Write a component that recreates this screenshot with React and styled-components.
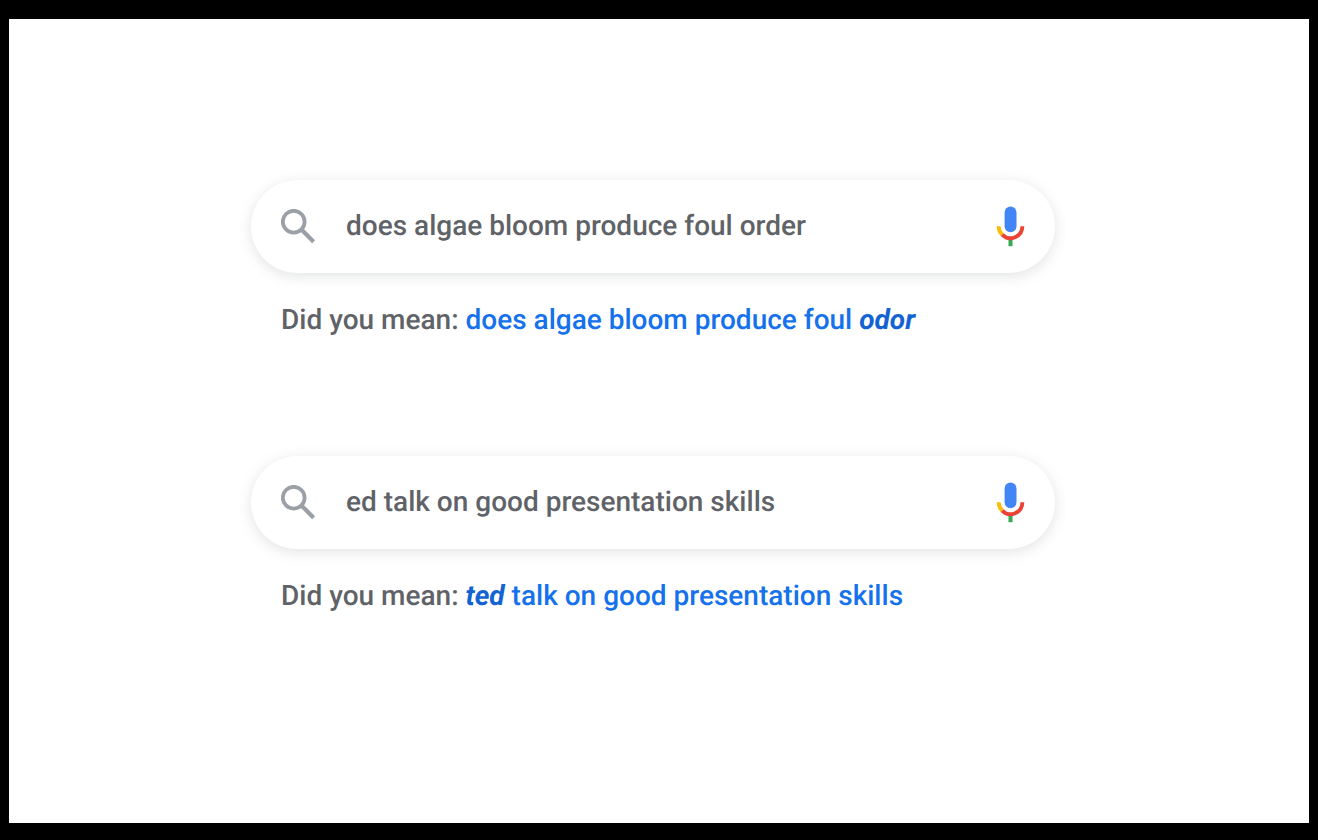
import React from 'react'
import styled, { createGlobalStyle } from 'styled-components'

const GlobalStyle = createGlobalStyle`
    * {
        box-sizing: border-box;
    }

    body {
        margin: 0;
        font-family: Roboto, sans-serif;
        color: #5f6368;
        background: #000000;
        text-rendering: geometricPrecision;
    }
`

const Frame = styled.div`
    display: flex;
    min-height: 100vh;
    padding: 19px 9px 17px;
`

const Main = styled.main`
    flex: 1;
    display: flex;
    flex-direction: column;
    align-items: center;
    gap: 117px;
    padding: 161px 12px 48px 0;
    background: #ffffff;
`

const Search = styled.form`
    width: 100%;
    max-width: 804px;
`

const Bar = styled.div`
    display: flex;
    align-items: center;
    height: 93px;
    padding: 0 29px 0 30px;
    border-radius: 48px;
    background: #ffffff;
    box-shadow: 0 3px 14px rgba(60, 64, 67, 0.15);
`

const Label = styled.label`
    display: flex;
`

const Field = styled.input`
    flex: 1;
    min-width: 0;
    margin: 0 30px;
    padding: 0 0 2px;
    border: none;
    outline: none;
    font: 500 28px Roboto, sans-serif;
    color: #5f6368;
    background: transparent;
    text-rendering: inherit;
`

const MicButton = styled.button`
    display: flex;
    padding: 0;
    border: none;
    background: none;
    cursor: pointer;
`

const Suggestion = styled.p`
    margin: 27px 0 0 30px;
    font-size: 28px;
    font-weight: 500;
    line-height: 39px;
`

const SuggestionLink = styled.a`
    color: #1571ec;
    text-decoration: none;
`

const Fix = styled.em`
    font-weight: 700;
    color: #1463d3;
`

const SearchIcon = () => (
    <svg width="35" height="35" viewBox="0 0 35 35" fill="none" stroke="#9aa0a6" aria-hidden="true">
        <circle cx="12.7" cy="12.7" r="10.9" strokeWidth="3.8" />
        <path d="M20.4 20.4 L32.6 32.7" strokeWidth="4.2" />
    </svg>
)

const MicIcon = () => (
    <svg width="30" height="41" viewBox="0 0 30 41" fill="none" aria-hidden="true">
        <rect x="8.6" y="0.5" width="11.9" height="25.7" rx="5.95" fill="#4285f4" />
        <path d="M14.5 32.5 V40.2" stroke="#34a853" strokeWidth="4" />
        <path d="M2.65 20.3 A11.85 11.85 0 0 0 6.12 28.68" stroke="#fbbc04" strokeWidth="3.9" />
        <path d="M6.12 28.68 A11.85 11.85 0 0 0 26.35 20.3" stroke="#ea4335" strokeWidth="3.9" />
    </svg>
)

const SearchBox = ({ id, query, children }) => (
    <Search role="search" onSubmit={e => e.preventDefault()}>
        <Bar>
            <Label htmlFor={id} aria-label="Search">
                <SearchIcon />
            </Label>
            <Field id={id} type="text" defaultValue={query} />
            <MicButton type="button" aria-label="Search by voice">
                <MicIcon />
            </MicButton>
        </Bar>
        <Suggestion>
            Did you mean: <SuggestionLink href="#">{children}</SuggestionLink>
        </Suggestion>
    </Search>
)

export default () => (
    <>
        <GlobalStyle />
        <Frame>
            <Main>
                <SearchBox id="algae" query="does algae bloom produce foul order">
                    does algae bloom produce foul <Fix>odor</Fix>
                </SearchBox>
                <SearchBox id="talk" query="ed talk on good presentation skills">
                    <Fix>ted</Fix> talk on good presentation skills
                </SearchBox>
            </Main>
        </Frame>
    </>
)
